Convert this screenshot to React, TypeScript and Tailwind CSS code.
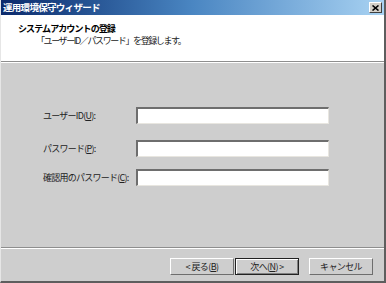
import React from "react";

const font = { fontFamily: '"MS UI Gothic", "Noto Sans CJK JP", sans-serif' };

const Field = ({ label, mn, className = "" }: { label: string; mn: string; className?: string }) => {
  const i = label.indexOf(mn);
  return (
    <div className={`flex items-center ${className}`}>
      <span className="w-[96px] pl-[3px] text-[9px] tracking-[-0.75px] text-[#222] whitespace-nowrap">
        {label.slice(0, i)}
        <span className="underline">{mn}</span>
        {label.slice(i + 1)}
      </span>
      <div className="w-[193px] h-[17px] bg-white border-t-2 border-l-2 border-t-[#6e6e6e] border-l-[#6e6e6e] border-b border-r border-b-[#e8e6e0] border-r-[#e8e6e0]" />
    </div>
  );
};

const Btn = ({ children, primary = false }: { children: React.ReactNode; primary?: boolean }) => (
  <button
    className={`w-[64px] h-[17px] flex items-center justify-center text-[9px] tracking-[-0.6px] text-[#222] bg-[#cecece] ${
      primary
        ? "border border-[#222] shadow-[inset_1px_1px_0_#fff,inset_-1px_-1px_0_#808080]"
        : "border-t border-l border-t-white border-l-white border-b border-r border-b-[#6e6e6e] border-r-[#6e6e6e]"
    }`}
  >
    {children}
  </button>
);

export default function App() {
  return (
    <div
      style={font}
      className="w-[386px] h-[283px] flex flex-col bg-[#cecece] border-l border-l-[#e6e6e6] border-r-2 border-r-[#5e5e5e] border-b-2 border-b-[#5e5e5e]"
    >
      <div className="h-[15px] flex items-center justify-between pl-[2px] pr-[2px] bg-gradient-to-r from-[#0c2a6c] via-[#4a86c2] to-[#a8d2f2]">
        <span className="text-[9.5px] font-bold text-white tracking-[-0.7px] leading-none">運用環境保守ウィザード</span>
        <div className="w-[13px] h-[11px] flex items-center justify-center bg-[#d4d0c8] border-t border-l border-t-white border-l-white border-b border-r border-b-[#404040] border-r-[#404040]">
          <svg width="7" height="6" viewBox="0 0 7 6">
            <path d="M0.5 0.5 L6.5 5.5 M6.5 0.5 L0.5 5.5" stroke="#000" strokeWidth="1.6" />
          </svg>
        </div>
      </div>
      <div className="h-[46px] bg-white pl-[17px] pt-[8px]">
        <div className="text-[9px] font-bold tracking-[-0.9px] text-black leading-[12px]">システムアカウントの登録</div>
        <div className="text-[9px] tracking-[-1.4px] text-[#222] leading-[12px] pl-[18px]">「ユーザーID／パスワード」を登録します。</div>
      </div>
      <div className="border-t border-t-[#8e8e8e] border-b border-b-white" />
      <div className="flex-1 flex flex-col pl-[39px] pt-[44px]">
        <Field label="ユーザーID(U):" mn="U" />
        <Field label="パスワード(P):" mn="P" className="mt-[16px]" />
        <Field label="確認用のパスワード(C):" mn="C" className="mt-[12px]" />
      </div>
      <div className="border-t border-t-[#8e8e8e] border-b border-b-white" />
      <div className="h-[32px] flex items-start justify-end pt-[9px] pr-[11px]">
        <Btn>&lt; 戻る(<span className="underline">B</span>)</Btn>
        <div className="ml-[1px]">
          <Btn primary>
            次へ(<span className="underline">N</span>) &gt;
          </Btn>
        </div>
        <div className="ml-[10px]">
          <Btn>キャンセル</Btn>
        </div>
      </div>
    </div>
  );
}
